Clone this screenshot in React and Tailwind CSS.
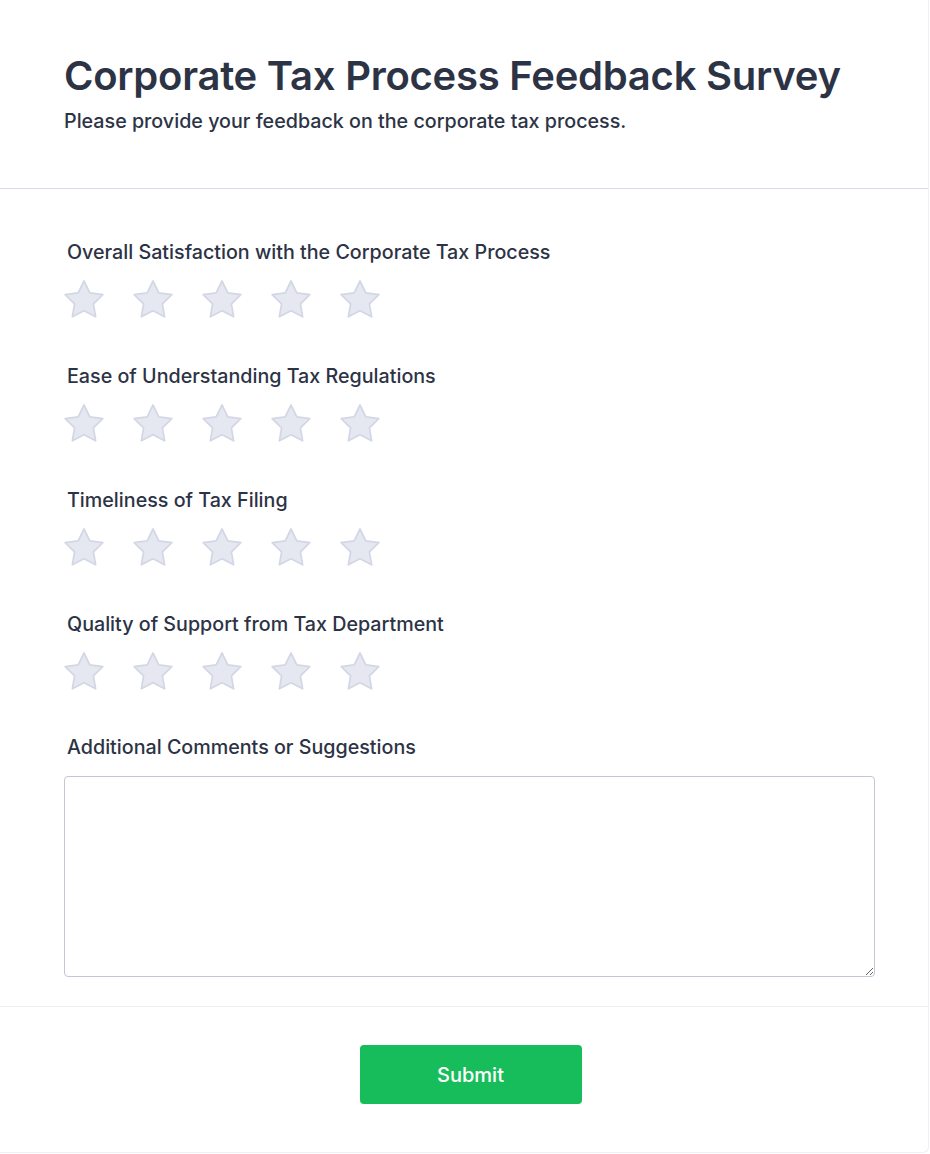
import React from 'react';

const QUESTIONS = [
  'Overall Satisfaction with the Corporate Tax Process',
  'Ease of Understanding Tax Regulations',
  'Timeliness of Tax Filing',
  'Quality of Support from Tax Department',
];

function Star() {
  return (
    <svg width="38" height="36" viewBox="2 2 20 19.1" className="overflow-visible">
      <polygon
        points="12,2 15.09,8.26 22,9.27 17,14.14 18.18,21.02 12,17.77 5.82,21.02 7,14.14 2,9.27 8.91,8.26"
        fill="#e5e7f1"
        stroke="#d3d7e5"
        strokeWidth="0.9"
        strokeLinejoin="round"
      />
    </svg>
  );
}

function RatingRow() {
  return (
    <div className="flex gap-[31px] pl-[1px]">
      {[1, 2, 3, 4, 5].map(i => <Star key={i} />)}
    </div>
  );
}

export default function App() {
  return (
    <div className="w-[929px] h-[1153px] bg-white border-r border-b border-[#f0f0f4] rounded-br-md font-['Inter',sans-serif] text-[#2c3345]">
      {/* Header */}
      <div className="px-16 pt-[52px] pb-[53px] border-b border-[#d9d9ec]">
        <h1 className="text-[40px] leading-[48px] font-semibold tracking-[-0.25px]">Corporate Tax Process Feedback Survey</h1>
        <p className="text-[19.7px] leading-[27px] font-medium mt-2">Please provide your feedback on the corporate tax process.</p>
      </div>

      {/* Questions */}
      <div className="px-16 pt-[50px]">
        {QUESTIONS.map(q => (
          <div key={q} className="mb-[46px]">
            <p className="pl-[3px] text-[19.7px] leading-[27px] font-medium mb-[15px]">{q}</p>
            <RatingRow />
          </div>
        ))}
        <div className="-mt-[1px]">
          <p className="pl-[3px] text-[19.7px] leading-[27px] font-medium mb-[15px]">Additional Comments or Suggestions</p>
          <textarea className="block w-[811px] h-[201px] border border-[#c3c6d4] rounded-[4px] resize-y p-2 outline-none" />
        </div>
      </div>

      {/* Footer */}
      <div className="mt-[29px] border-t border-[#ececf2] flex justify-center pl-[13px] pt-[38px]">
        <button className="w-[222px] h-[59px] bg-[#18bd5b] rounded-[4px] text-white text-xl font-medium">Submit</button>
      </div>
    </div>
  );
}
